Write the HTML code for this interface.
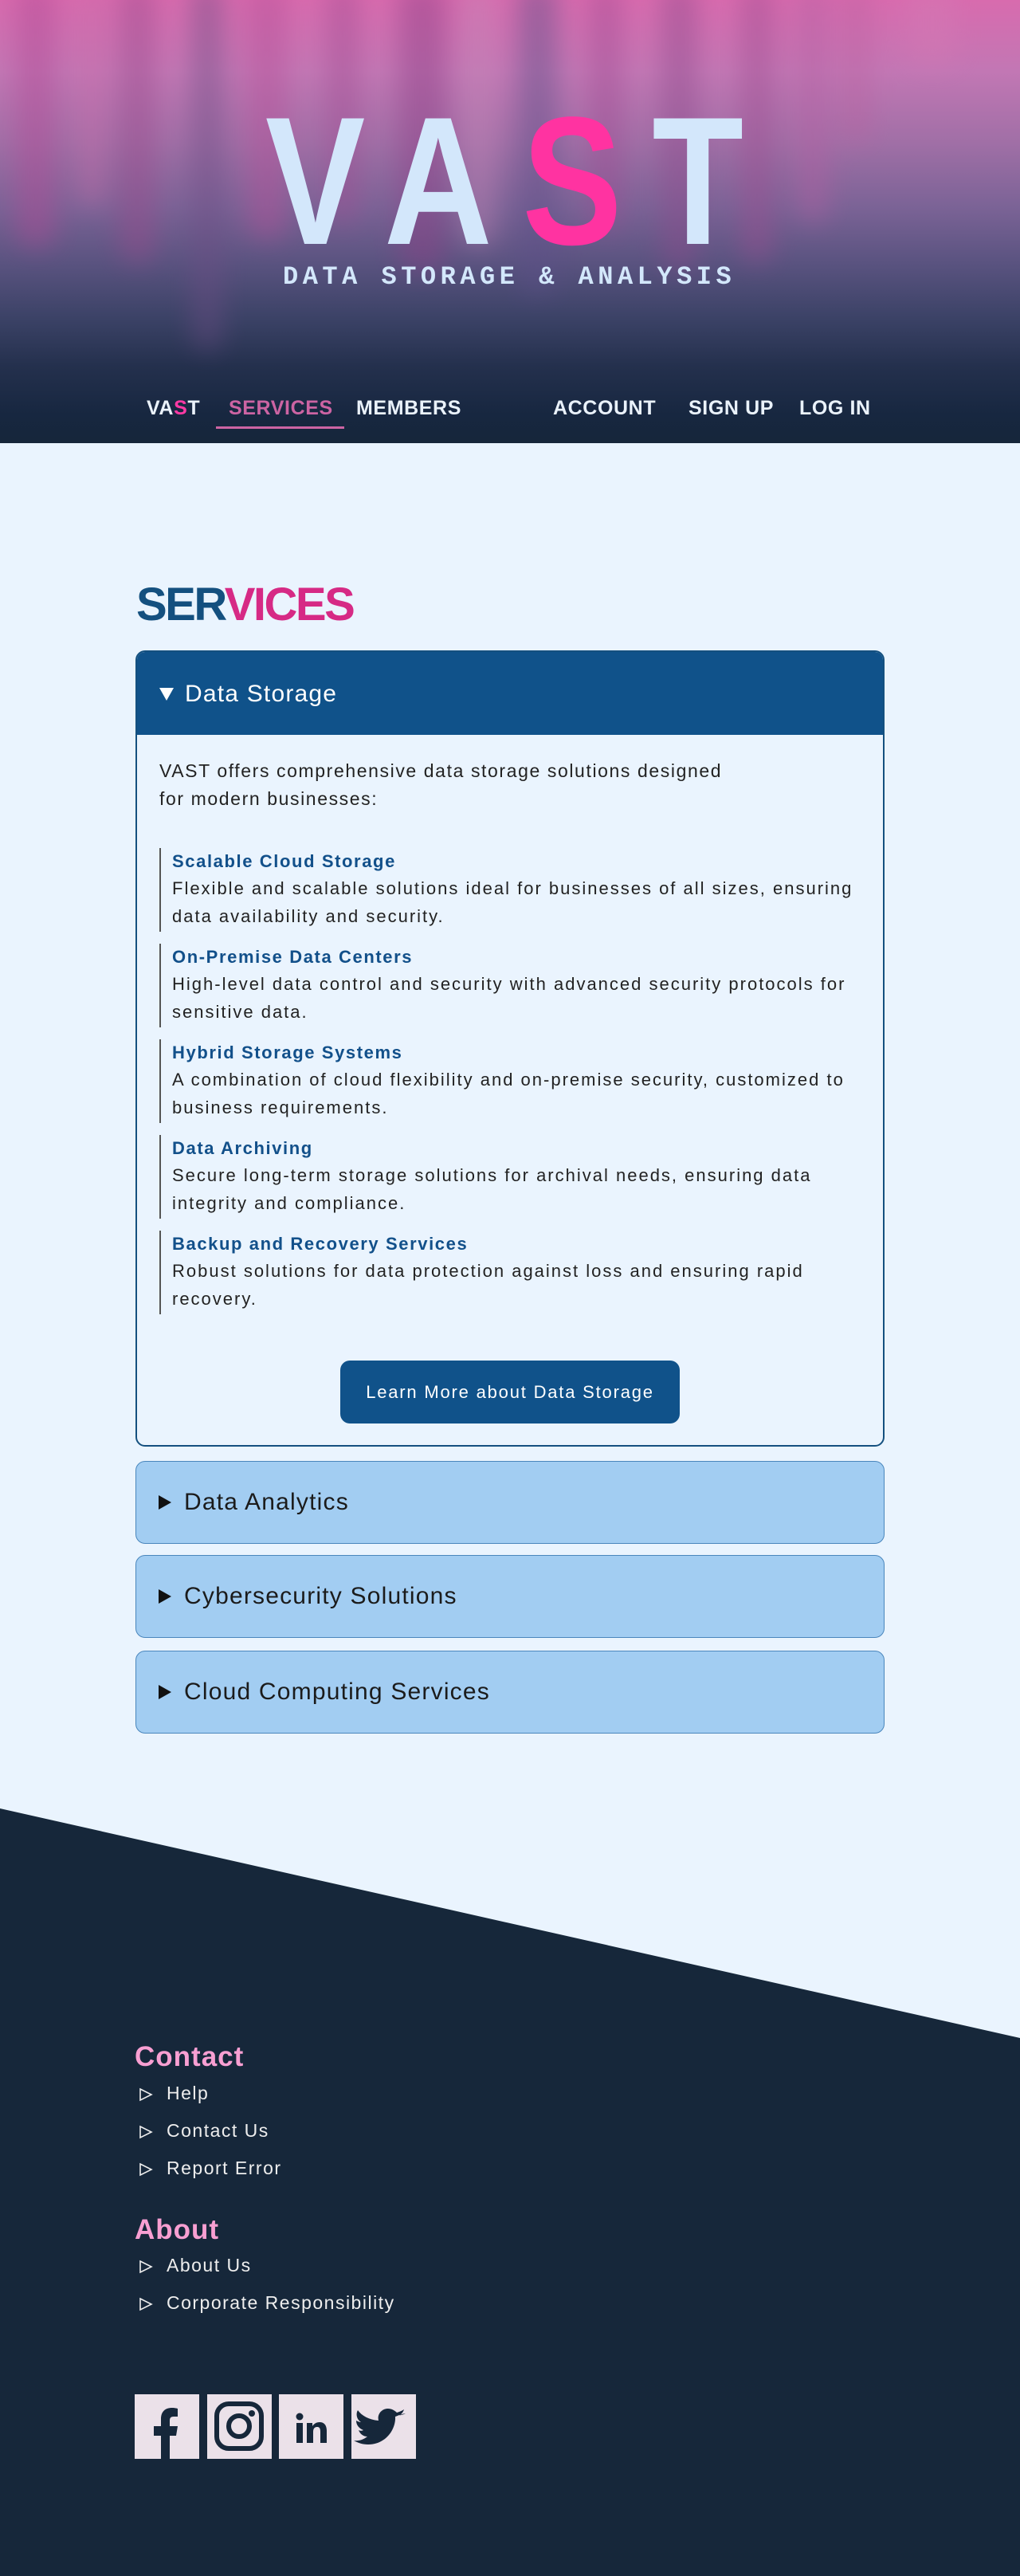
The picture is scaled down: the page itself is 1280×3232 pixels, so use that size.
<!DOCTYPE html>
<html><head><meta charset="utf-8">
<style>
*{margin:0;padding:0;box-sizing:border-box}
html,body{width:1280px;height:3232px;background:#eaf4fe;font-family:"Liberation Sans",sans-serif;overflow:hidden}
.abs{position:absolute;white-space:nowrap}
#hdr{position:absolute;left:0;top:0;width:1280px;height:556px;overflow:hidden;
background:linear-gradient(180deg,#d86bae 0px,#c277b4 90px,#a06fa6 180px,#7b6396 260px,#5a5380 330px,#3b4266 400px,#24304d 460px,#172740 520px,#16263a 556px)}
#stripes{position:absolute;left:-20px;top:-20px;width:1320px;height:440px;filter:blur(16px);opacity:0.45}
#stripes div{position:absolute;top:0;border-radius:0 0 20px 20px}
.nav{font-weight:bold;font-size:25px;line-height:25px;letter-spacing:0.6px;color:#eaf2fb;top:500px}
.card{position:absolute;left:170px;width:940px;border-radius:12px}
.item{position:absolute;left:200px;width:900px;border-left:2px solid #555;padding-left:14px;height:105px;white-space:nowrap}
.item b{display:block;font-size:22px;line-height:33px;color:#12508a;letter-spacing:1.6px}
.item p{font-size:22px;line-height:35px;color:#222;letter-spacing:2px}
.col{position:absolute;left:170px;width:940px;height:104px;background:#a2cdf2;border:1.5px solid #4a86bc;border-radius:12px}
.col span{position:absolute;left:60px;top:36px;font-size:30px;line-height:30px;color:#1b1b1b;letter-spacing:1.2px;white-space:nowrap}
.col i{position:absolute;left:28px;top:42px;width:0;height:0;border-top:9px solid transparent;border-bottom:9px solid transparent;border-left:16px solid #111}
.fl{font-size:23px;line-height:23px;color:#eee;left:209px;letter-spacing:1.5px}
.fh{font-size:35px;line-height:35px;font-weight:bold;color:#f89fd2;left:169px;letter-spacing:1px}
.tri{position:absolute;left:174px}
.soc{position:absolute;top:3004px;width:81px;height:81px;background:#ebe1e9}
</style></head><body>
<div id="hdr">
 <div id="stripes">
  <div style="left:40px;width:50px;height:330px;background:#b04a95"></div>
  <div style="left:120px;width:30px;height:280px;background:#c96aa8"></div>
  <div style="left:170px;width:45px;height:350px;background:#9a4a8c"></div>
  <div style="left:260px;width:40px;height:460px;background:#6c4d84"></div>
  <div style="left:330px;width:50px;height:320px;background:#b55098"></div>
  <div style="left:430px;width:40px;height:300px;background:#a04c92"></div>
  <div style="left:520px;width:60px;height:360px;background:#8d3f86"></div>
  <div style="left:600px;width:40px;height:330px;background:#c385b6"></div>
  <div style="left:670px;width:50px;height:390px;background:#5c4f88"></div>
  <div style="left:760px;width:40px;height:310px;background:#a04a92"></div>
  <div style="left:850px;width:45px;height:360px;background:#8e4a8c"></div>
  <div style="left:950px;width:40px;height:350px;background:#9d4c90"></div>
  <div style="left:1020px;width:40px;height:300px;background:#b35fa2"></div>
  <div style="left:1080px;width:30px;height:200px;background:#b9609f"></div>
  <div style="left:1160px;width:60px;height:100px;background:#d479b4"></div>
 </div>
 <div class="abs" style="left:333px;top:113px;font-size:229px;line-height:229px;font-weight:bold;color:#d3e7fb;letter-spacing:46px;transform:scaleX(0.82);transform-origin:0 0">VA<span style="color:#ff33a1">S</span>T</div>
 <div class="abs" style="left:355px;top:332px;font-family:'Liberation Mono',monospace;font-weight:bold;font-size:32px;line-height:32px;letter-spacing:5.5px;color:#d3e7fb">DATA STORAGE &amp; ANALYSIS</div>
 <div class="abs nav" style="left:184px">VA<span style="color:#ff3aa5">S</span>T</div>
 <div class="abs nav" style="left:287px;color:#cc64a3">SERVICES</div>
 <div class="abs" style="left:271px;top:535px;width:161px;height:3px;background:#cc64a3"></div>
 <div class="abs nav" style="left:447px">MEMBERS</div>
 <div class="abs nav" style="left:694px">ACCOUNT</div>
 <div class="abs nav" style="left:864px">SIGN UP</div>
 <div class="abs nav" style="left:1003px">LOG IN</div>
</div>

<div class="abs" style="left:171px;top:730px;font-size:58px;line-height:58px;font-weight:bold;letter-spacing:-2.5px;color:#14507f">SER<span style="color:#d62a85">VICES</span></div>

<div class="card" style="top:816px;height:999px;border:2px solid #14507f;background:#eaf4fe;overflow:hidden">
 <div style="position:absolute;left:0;top:0;width:100%;height:104px;background:#10528a"></div>
 <div class="abs" style="left:28px;top:45px;width:0;height:0;border-left:9px solid transparent;border-right:9px solid transparent;border-top:16px solid #fff"></div>
 <div class="abs" style="left:60px;top:38px;font-size:30px;line-height:30px;color:#fff;letter-spacing:1.2px">Data Storage</div>
</div>
<div class="abs" style="left:200px;top:950px;font-size:23px;line-height:35px;color:#222;letter-spacing:1.6px">VAST offers comprehensive data storage solutions designed<br>for modern businesses:</div>

<div class="item" style="top:1064px"><b>Scalable Cloud Storage</b><p>Flexible and scalable solutions ideal for businesses of all sizes, ensuring<br>data availability and security.</p></div>
<div class="item" style="top:1184px"><b>On-Premise Data Centers</b><p>High-level data control and security with advanced security protocols for<br>sensitive data.</p></div>
<div class="item" style="top:1304px"><b>Hybrid Storage Systems</b><p>A combination of cloud flexibility and on-premise security, customized to<br>business requirements.</p></div>
<div class="item" style="top:1424px"><b>Data Archiving</b><p>Secure long-term storage solutions for archival needs, ensuring data<br>integrity and compliance.</p></div>
<div class="item" style="top:1544px"><b>Backup and Recovery Services</b><p>Robust solutions for data protection against loss and ensuring rapid<br>recovery.</p></div>

<div class="abs" style="left:427px;top:1707px;width:426px;height:79px;background:#10528a;border-radius:12px;color:#fff;font-size:22px;line-height:79px;text-align:center;letter-spacing:1.8px">Learn More about Data Storage</div>

<div class="col" style="top:1833px"><i></i><span>Data Analytics</span></div>
<div class="col" style="top:1951px"><i></i><span>Cybersecurity Solutions</span></div>
<div class="col" style="top:2071px"><i></i><span>Cloud Computing Services</span></div>

<svg class="abs" style="left:0;top:0" width="1280" height="3232"><polygon points="0,2269 1280,2557 1280,3232 0,3232" fill="#16273a"/></svg>

<div class="abs fh" style="top:2563px">Contact</div>
<svg class="tri" style="top:2619px" width="18" height="18"><path d="M2 2 L16 9 L2 16 Z" fill="none" stroke="#eee" stroke-width="1.6"/></svg>
<div class="abs fl" style="top:2615px">Help</div>
<svg class="tri" style="top:2666px" width="18" height="18"><path d="M2 2 L16 9 L2 16 Z" fill="none" stroke="#eee" stroke-width="1.6"/></svg>
<div class="abs fl" style="top:2662px">Contact Us</div>
<svg class="tri" style="top:2713px" width="18" height="18"><path d="M2 2 L16 9 L2 16 Z" fill="none" stroke="#eee" stroke-width="1.6"/></svg>
<div class="abs fl" style="top:2709px">Report Error</div>

<div class="abs fh" style="top:2780px">About</div>
<svg class="tri" style="top:2835px" width="18" height="18"><path d="M2 2 L16 9 L2 16 Z" fill="none" stroke="#eee" stroke-width="1.6"/></svg>
<div class="abs fl" style="top:2831px">About Us</div>
<svg class="tri" style="top:2882px" width="18" height="18"><path d="M2 2 L16 9 L2 16 Z" fill="none" stroke="#eee" stroke-width="1.6"/></svg>
<div class="abs fl" style="top:2878px">Corporate Responsibility</div>

<div class="soc" style="left:169px"><svg width="81" height="81"><path d="M33 81 V52 H24 V40 H33 V31 C33 22 38 17 47 17 C51 17 54 18 54 18 V28 H49 C45 28 44 30 44 33 V40 H54 L52 52 H44 V81 Z" fill="#16273a"/></svg></div>
<div class="soc" style="left:260px"><svg width="81" height="81"><rect x="12" y="12" width="56" height="56" rx="15" fill="none" stroke="#16273a" stroke-width="6"/><circle cx="40" cy="40" r="13" fill="none" stroke="#16273a" stroke-width="6"/><circle cx="56" cy="24" r="4" fill="#16273a"/></svg></div>
<div class="soc" style="left:350px"><svg width="81" height="81"><circle cx="26" cy="28" r="4.5" fill="#16273a"/><rect x="22" y="36" width="8" height="25" fill="#16273a"/><path d="M35 61 V36 H42 V40 C44 37 47 35 51 35 C57 35 60 39 60 46 V61 H52 V47 C52 43 51 41 48 41 C45 41 43 43 43 47 V61 Z" fill="#16273a"/></svg></div>
<div class="soc" style="left:441px"><svg width="81" height="81"><path d="M68 24 C65 25.5 63 26 60 26.5 C63 25 65 22 66 19 C63 21 60 22 57 23 C54 20 50 18 46 18 C38 18 32 25 34 33 C22 32 13 27 8 20 C5 25 7 32 12 35 C10 35 8 34 6 33 C6 39 10 43 15 45 C13 46 11 46 9 45 C11 50 15 53 20 53 C15 57 9 59 3 58 C8 61 14 63 21 63 C43 63 56 44 55 28 C58 27 62 25 68 24 Z" fill="#16273a"/></svg></div>
</body></html>
